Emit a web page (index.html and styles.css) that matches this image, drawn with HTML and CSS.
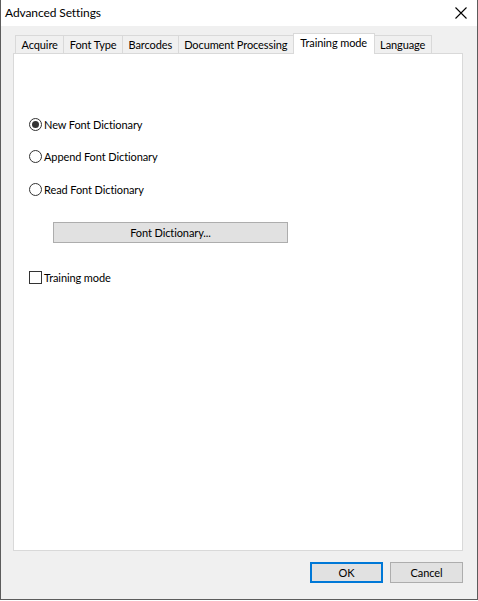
FILE: index.html
```html
<!DOCTYPE html>
<html lang="en">
<head>
    <meta charset="UTF-8">
    <title>Advanced Settings</title>
    <link rel="stylesheet" href="styles.css">
</head>
<body>
    <div class="window">
        <div class="titlebar">
            <span class="title">Advanced Settings</span>
            <svg class="close" width="12" height="12" viewBox="0 0 12 12">
                <path d="M0.5 0.5 L11.5 11.5 M11.5 0.5 L0.5 11.5" stroke="#000" stroke-width="1.1"/>
            </svg>
        </div>
        <div class="content">
            <div class="tabs">
                <div class="tab">Acquire</div>
                <div class="tab">Font Type</div>
                <div class="tab">Barcodes</div>
                <div class="tab">Document Processing</div>
                <div class="tab active">Training mode</div>
                <div class="tab">Language</div>
            </div>
            <div class="panel">
                <label class="option"><span class="radio checked"></span>New Font Dictionary</label>
                <label class="option"><span class="radio"></span>Append Font Dictionary</label>
                <label class="option"><span class="radio"></span>Read Font Dictionary</label>
                <div class="dict-row">
                    <button class="btn wide">Font Dictionary...</button>
                </div>
                <label class="option"><span class="checkbox"></span>Training mode</label>
            </div>
            <div class="footer">
                <button class="btn default">OK</button>
                <button class="btn">Cancel</button>
            </div>
        </div>
    </div>
</body>
</html>
```

FILE: styles.css
```css
body {
    margin: 0;
    font-family: Lato, "Noto Sans", sans-serif;
    font-size: 11px;
    letter-spacing: -0.1px;
    color: #000;
    background: #fff;
}
.window {
    width: 476px;
    height: 599px;
    border: 1px solid #5c5c5c;
    border-top: none;
    display: flex;
    flex-direction: column;
    background: #f0f0f0;
}
.titlebar {
    height: 26px;
    background: #fff;
    display: flex;
    align-items: center;
    justify-content: space-between;
    padding: 0 10px 0 4px;
}
.title {
    font-size: 12px;
    margin-top: -1px;
}
.content {
    flex: 1;
    padding: 7px 14px 0 12px;
    display: flex;
    flex-direction: column;
}
.tabs {
    display: flex;
    padding-left: 2px;
    height: 20px;
    align-items: flex-end;
}
.tab {
    flex-shrink: 0;
    white-space: nowrap;
    height: 18px;
    line-height: 17px;
    padding: 0 5.5px;
    border: 1px solid #d9d9d9;
    border-bottom: none;
    border-left: none;
    background: #f0f0f0;
    box-sizing: border-box;
}
.tab:first-child {
    border-left: 1px solid #d9d9d9;
}
.tab.active {
    height: 21px;
    background: #fff;
    border-left: 1px solid #d9d9d9;
    line-height: 18px;
    padding: 0 6.5px;
    margin-left: -1px;
    margin-bottom: -1px;
    position: relative;
    z-index: 1;
}
.panel {
    height: 498px;
    box-sizing: border-box;
    background: #fff;
    border: 1px solid #d9d9d9;
    padding: 61px 0 0 15px;
    display: flex;
    flex-direction: column;
}
.option {
    display: flex;
    align-items: center;
    height: 18px;
    gap: 2px;
    margin-bottom: 14px;
}
.option:nth-child(2) {
    margin-bottom: 15px;
}
.radio {
    width: 11px;
    height: 11px;
    border: 1px solid #333;
    border-radius: 50%;
    display: inline-flex;
    align-items: center;
    justify-content: center;
    background: #fff;
}
.radio.checked::after {
    content: "";
    width: 7px;
    height: 7px;
    border-radius: 50%;
    background: #333;
}
.checkbox {
    width: 11px;
    height: 11px;
    border: 1px solid #333;
    background: #fff;
}
.dict-row {
    padding: 10px 0 0 24px;
    height: 21px;
    margin-bottom: 25px;
}
.btn {
    font-family: inherit;
    font-size: 11px;
    letter-spacing: -0.1px;
    height: 21px;
    width: 73px;
    border: 1px solid #adadad;
    background: #e1e1e1;
    padding: 0;
    color: #000;
}
.btn.wide {
    width: 235px;
}
.btn.default {
    border: 2px solid #0078d7;
}
.footer {
    display: flex;
    justify-content: flex-end;
    gap: 7px;
    padding-top: 11px;
}
```
